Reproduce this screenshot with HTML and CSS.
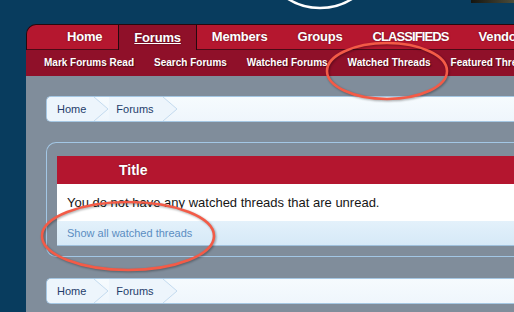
FILE: index.html
```html
<!DOCTYPE html>
<html lang="en">

<head>
  <meta charset="UTF-8">
  <meta name="viewport" content="width=device-width, initial-scale=1.0">
  <title>Watched Threads</title>
  <link rel="stylesheet" href="styles.css">
</head>

<body>
  <div class="header">
    <svg class="logo" width="72" height="24" viewBox="0 0 72 24">
      <circle cx="36" cy="-52" r="60" fill="none" stroke="#ffffff" stroke-width="2.5" />
    </svg>
    <div class="banner-thumb"></div>
  </div>

  <div class="nav">
    <ul class="tabs">
      <li class="tab first">Home</li>
      <li class="tab selected"><a href="#">Forums</a></li>
      <li class="tab">Members</li>
      <li class="tab">Groups</li>
      <li class="tab caps">CLASSIFIEDS</li>
      <li class="tab">Vendors</li>
    </ul>
    <ul class="subnav">
      <li>Mark Forums Read</li>
      <li>Search Forums</li>
      <li>Watched Forums</li>
      <li>Watched Threads</li>
      <li>Featured Threads</li>
    </ul>
  </div>

  <div class="content">
    <div class="breadcrumb">
      <span class="crumb">Home</span>
      <svg class="arrow" width="15" height="24" viewBox="0 0 15 24">
        <polygon points="0,0 14,12 0,24" fill="#edf5fc" />
        <polyline points="0,0 14,12 0,24" fill="none" stroke="#c3daee" />
      </svg>
      <span class="crumb next">Forums</span>
      <svg class="arrow" width="15" height="24" viewBox="0 0 15 24">
        <polygon points="0,0 14,12 0,24" fill="#edf5fc" />
        <polyline points="0,0 14,12 0,24" fill="none" stroke="#c3daee" />
      </svg>
    </div>

    <div class="section">
      <div class="thread-list">
        <div class="list-head">Title</div>
        <div class="list-body">You do not have any watched threads that are unread.</div>
        <div class="list-foot"><a href="#">Show all watched threads</a></div>
      </div>
    </div>

    <div class="breadcrumb">
      <span class="crumb">Home</span>
      <svg class="arrow" width="15" height="24" viewBox="0 0 15 24">
        <polygon points="0,0 14,12 0,24" fill="#edf5fc" />
        <polyline points="0,0 14,12 0,24" fill="none" stroke="#c3daee" />
      </svg>
      <span class="crumb next">Forums</span>
      <svg class="arrow" width="15" height="24" viewBox="0 0 15 24">
        <polygon points="0,0 14,12 0,24" fill="#edf5fc" />
        <polyline points="0,0 14,12 0,24" fill="none" stroke="#c3daee" />
      </svg>
    </div>
  </div>

  <!-- hand drawn marks over the screenshot -->
  <svg class="marks" width="514" height="312" viewBox="0 0 514 312">
    <ellipse cx="387" cy="71" rx="60" ry="28" />
    <ellipse cx="128" cy="236" rx="86" ry="34" />
  </svg>
</body>

</html>
```

FILE: styles.css
```css
body {
  margin: 0;
  background-color: #083c5e;
  font-family: "Liberation Sans", Arial, sans-serif;
  overflow: hidden;
  height: 312px;
  display: flex;
  flex-direction: column;
}

ul {
  margin: 0;
  padding: 0;
  list-style: none;
}

a {
  text-decoration: none;
}

.header {
  display: flex;
  height: 24px;
  flex-shrink: 0;
}

.logo {
  margin-left: 284px;
}

.banner-thumb {
  margin-left: auto;
  width: 43px;
  height: 3px;
  background: linear-gradient(to right, #151510, #4c4c3a);
}

.nav {
  margin-left: 26px;
  flex-shrink: 0;
}

.tabs {
  display: flex;
  height: 25px;
  background-color: #b5172f;
  border-top: 1px solid #25090f;
  border-left: 1px solid #25090f;
  border-top-left-radius: 10px;
  white-space: nowrap;
  overflow: hidden;
}

.tab {
  padding: 0 15px;
  line-height: 24px;
  border-bottom: 1px solid #4a0a16;
  color: white;
  font-size: 13px;
  font-weight: bold;
  letter-spacing: -0.2px;
  text-shadow: 0 0 2px rgba(0, 0, 0, 0.45);
}

.tab.first {
  padding-left: 40px;
  padding-right: 16px;
}

.tab.caps {
  letter-spacing: -0.9px;
}

.tab.selected {
  background-color: #8f1029;
  border-bottom: none;
  border-left: 1px solid #25090f;
  border-right: 1px solid #25090f;
  line-height: 25px;
}

.tab.selected a {
  color: white;
  text-decoration: underline;
}

.subnav {
  display: flex;
  height: 26px;
  padding-left: 8px;
  background-color: #8f1029;
  white-space: nowrap;
  overflow: hidden;
}

.subnav li {
  padding: 0 10px;
  line-height: 26px;
  color: white;
  font-size: 10px;
  font-weight: bold;
  text-shadow: 1px 1px 1px rgba(0, 0, 0, 0.5);
}

.content {
  flex: 1;
  margin-left: 26px;
  background-color: #808d9b;
  padding: 20px 0 0 20px;
}

.breadcrumb {
  display: flex;
  height: 24px;
  border: 1px solid #a5c7e3;
  border-right: none;
  border-radius: 5px 0 0 5px;
  background: linear-gradient(to bottom, #f6fbfe, #eff6fc);
}

.crumb {
  padding-left: 10px;
  padding-right: 8px;
  line-height: 24px;
  font-size: 11px;
  color: #1f3d6b;
  background-color: #edf5fc;
}

.crumb:first-child {
  border-radius: 5px 0 0 5px;
}

.crumb.next {
  padding-left: 7px;
  padding-right: 9px;
}

.arrow {
  display: block;
}

.section {
  margin-top: 20px;
  margin-bottom: 21px;
  border: 1px solid #a3c7e5;
  border-right: none;
  border-radius: 10px 0 0 10px;
  padding: 13px 0 10px 10px;
}

.thread-list {
  background-color: white;
}

.list-head {
  height: 28px;
  line-height: 28px;
  padding-left: 62px;
  background-color: #b4162f;
  color: white;
  font-size: 14px;
  font-weight: bold;
  text-shadow: 0 0 2px rgba(0, 0, 0, 0.35);
}

.list-body {
  height: 37px;
  line-height: 37px;
  padding-left: 10px;
  font-size: 13px;
  color: #161616;
}

.list-foot {
  height: 24px;
  line-height: 24px;
  padding-left: 10px;
  border-bottom: 1px solid #9fc0dc;
  background: linear-gradient(to bottom, #e3f1fb, #d6e9f7);
  font-size: 11px;
}

.list-foot a {
  color: #5b8dc2;
}

.marks {
  position: absolute;
  top: 0;
  left: 0;
  pointer-events: none;
}

.marks ellipse {
  fill: none;
  stroke: #f35b47;
  stroke-width: 2.6;
  filter: drop-shadow(1px 1px 1px rgba(0, 0, 0, 0.35));
}
```
